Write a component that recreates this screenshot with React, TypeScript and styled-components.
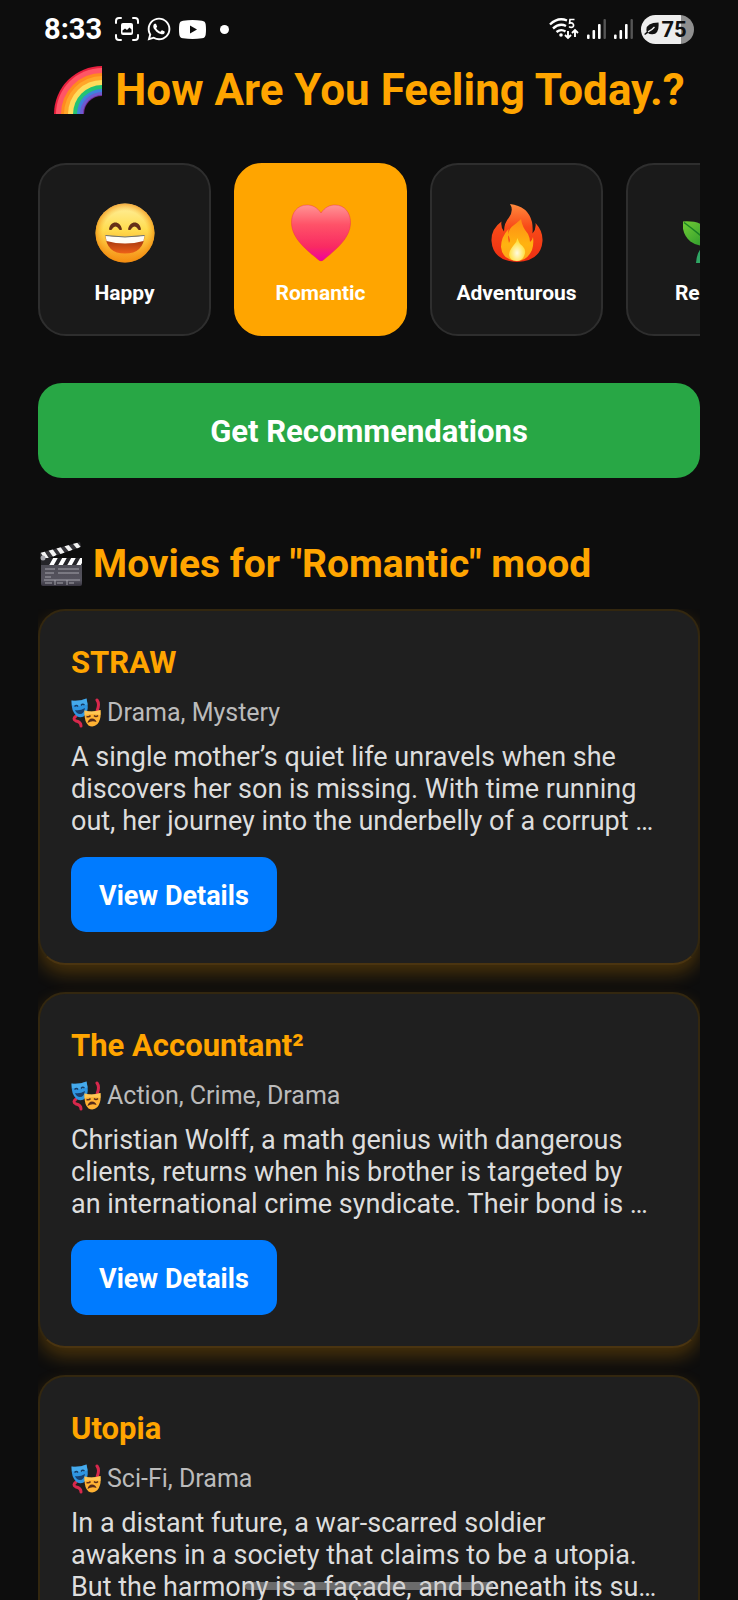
import React, { useState } from "react";
import styled, { createGlobalStyle, css } from "styled-components";
import { FaWhatsapp } from "react-icons/fa";

const GlobalStyle = createGlobalStyle`
  *, *::before, *::after { box-sizing: border-box; }
  body {
    margin: 0;
    background: #0d0d0d;
    color: #fff;
    font-family: Roboto, "Noto Sans", sans-serif;
  }
  button { font-family: inherit; cursor: pointer; border: 0; }
`;

const hiddenScrollbar = css`
  scrollbar-width: none;
  &::-webkit-scrollbar { display: none; }
`;

const Screen = styled.div`
  display: flex;
  flex-direction: column;
  height: 100vh;
  overflow: hidden;
`;

const StatusBar = styled.header`
  display: flex;
  flex: none;
  align-items: center;
  justify-content: space-between;
  height: 58px;
  padding: 0 44px;
`;

const StatusGroup = styled.div<{ $gap: number }>`
  display: flex;
  align-items: center;
  gap: ${(p) => p.$gap}px;
`;

const Clock = styled.time`
  margin-right: 6px;
  font-size: 29px;
  font-weight: 700;
  line-height: 32px;
`;

const Dot = styled.span`
  width: 9px;
  height: 9px;
  margin-left: 7px;
  border-radius: 50%;
  background: #fff;
`;

const Battery = styled.div`
  display: flex;
  align-items: center;
  justify-content: center;
  gap: 2px;
  width: 53px;
  height: 29px;
  padding-right: 4px;
  border-radius: 15px;
  background: linear-gradient(90deg, #ededed 75%, #8f8f8f 75%);
  color: #111;
  font-size: 22px;
  font-weight: 700;
  line-height: 29px;
`;

const Content = styled.main`
  flex: 1;
  min-height: 0;
  padding: 6px 38px 40px;
  overflow-y: auto;
  ${hiddenScrollbar}
`;

const PageTitle = styled.h1`
  display: flex;
  align-items: center;
  justify-content: center;
  gap: 12px;
  margin: 0 0 47px;
  color: #ffa500;
  font-size: 44px;
  font-weight: 700;
  line-height: 52px;
  white-space: nowrap;
`;

const MoodList = styled.div`
  display: flex;
  gap: 23px;
  margin-bottom: 47px;
  overflow-x: auto;
  ${hiddenScrollbar}
`;

const MoodTile = styled.button<{ $selected: boolean }>`
  display: flex;
  flex: none;
  flex-direction: column;
  align-items: center;
  gap: 18px;
  width: 173px;
  height: 173px;
  padding: 38px 0 0;
  border: 2px solid ${(p) => (p.$selected ? "#ffa500" : "#2e2e2e")};
  border-radius: 28px;
  background: ${(p) => (p.$selected ? "#ffa500" : "#1a1a1a")};
  color: #fff;
  font-size: 21px;
  font-weight: 700;
  line-height: 24px;
`;

const PrimaryButton = styled.button`
  width: 100%;
  height: 95px;
  padding: 2px 0 0;
  border-radius: 24px;
  background: #28a745;
  color: #fff;
  font-size: 31px;
  font-weight: 700;
`;

const SectionTitle = styled.h2`
  display: flex;
  align-items: center;
  gap: 9px;
  margin: 63px 0 22px;
  color: #ffa500;
  font-size: 39px;
  font-weight: 700;
  line-height: 46px;
  white-space: nowrap;
`;

const MovieList = styled.div`
  display: flex;
  flex-direction: column;
  gap: 27px;
  padding-bottom: 27px;
  overflow: hidden;
`;

const MovieCard = styled.article`
  padding: 31px;
  border: 2px solid #33270f;
  border-bottom-color: #4a3410;
  border-radius: 27px;
  background: #1f1f1f;
  box-shadow: 0 9px 18px rgba(255, 165, 0, 0.24);
`;

const MovieTitle = styled.h3`
  margin: 0;
  color: #ffa500;
  font-size: 31px;
  font-weight: 700;
  line-height: 42px;
`;

const Genres = styled.p`
  display: flex;
  align-items: center;
  gap: 6px;
  margin: 14px 0 13px;
  color: #bbb;
  font-size: 25px;
  line-height: 30px;
`;

const Overview = styled.p`
  margin: 0 0 20px;
  color: #ddd;
  font-size: 27px;
  line-height: 32px;
  white-space: pre-line;
`;

const DetailsButton = styled.button`
  display: block;
  height: 75px;
  padding: 2px 28px 0;
  border-radius: 15px;
  background: #007bff;
  color: #fff;
  font-size: 27px;
  font-weight: 700;
`;

const HomeIndicator = styled.div`
  position: fixed;
  bottom: 10px;
  left: 50%;
  width: 248px;
  height: 8px;
  border-radius: 4px;
  background: rgba(200, 200, 200, 0.45);
  transform: translateX(-50%);
`;

const CaptureIcon = () => (
  <svg width="24" height="24" viewBox="0 0 24 24" fill="none" stroke="#fff" strokeWidth="2" strokeLinecap="round" aria-hidden>
    <path d="M1 6V4a3 3 0 0 1 3-3h2M18 1h2a3 3 0 0 1 3 3v2M23 18v2a3 3 0 0 1-3 3h-2M6 23H4a3 3 0 0 1-3-3v-2" />
    <rect x="6" y="6" width="12" height="12" rx="2" fill="#fff" stroke="none" />
    <path d="M7.500 15.500v-2l2.500-2 2 1.500 2.500-2.500 2 2v3z" fill="#0d0d0d" stroke="none" />
  </svg>
);

const VideoIcon = () => (
  <svg width="27" height="19" viewBox="0 0 27 19" aria-hidden>
    <path d="M4 .7Q13.500-.5 23 .7q3.300.4 3.700 3.700.6 5 0 10-.4 3.500-3.700 3.900-9.500 1.200-19 0Q.700 17.900.300 14.400q-.6-5 0-10Q.700 1.100 4 .7z" fill="#fff" />
    <path d="M11 5.500v8l7-4z" fill="#0d0d0d" />
  </svg>
);

const WifiIcon = () => (
  <svg width="30" height="22" viewBox="0 0 30 22" fill="none" stroke="#fff" strokeWidth="2.400" aria-hidden>
    <path d="M1 6.500Q9-1.200 18 2.500M4 10.500q6.500-6 13-2.500M7.500 14q4.500-3.500 9-.5" />
    <circle cx="12" cy="17" r="1.800" fill="#fff" stroke="none" />
    <path d="M25.500 1.500h-4.500l-.4 3.600c4-1.300 5.500 3.800 2 4.300q-1.700.1-2.500-1" strokeWidth="1.700" />
    <path d="M19 13v7m-3-3 3 3 3-3M26 19v-7m-3 3 3-3 3 3" strokeWidth="1.900" />
  </svg>
);

const SignalIcon = () => (
  <svg width="19" height="20" viewBox="0 0 19 20" aria-hidden>
    <g fill="#fff">
      <rect x="0" y="15.500" width="2.600" height="4.500" rx="1" />
      <rect x="5.500" y="11" width="2.600" height="9" rx="1" />
      <rect x="11" y="5" width="2.600" height="15" rx="1" />
    </g>
    <rect x="16.500" y="0" width="2.400" height="20" rx="1" fill="#555" />
  </svg>
);

const LeafIcon = () => (
  <svg width="15" height="14" viewBox="0 0 15 14" aria-hidden>
    <path d="M14.500.5Q15.500 12 8.500 12.300 5.500 12.500 4 11L1 13l-.8-1 2.500-2.200Q.500 1 14.500.5z" fill="#111" />
    <path d="M4 9.800Q8 8 10.500 5" fill="none" stroke="#ededed" strokeWidth="1.300" />
  </svg>
);

const RainbowArt = () => {
  const bands = ["#e8203f", "#ff5566", "#ff8a1f", "#ffa629", "#ffdc5c", "#22c275", "#3f82dc", "#6c5bd0", "#77298f"];
  const radii = [48, 46, 41, 38, 34, 29, 25, 22, 19];
  return (
    <svg width="50" height="50" viewBox="0 0 50 50" aria-hidden>
      {bands.map((color, i) => (
        <path key={color} d={`M${49 - radii[i]} 49A${radii[i]} ${radii[i]} 0 0 1 49 ${49 - radii[i]}V49z`} fill={color} />
      ))}
      <path d="M31 49A18 18 0 0 1 49 31V49z" fill="#0d0d0d" />
    </svg>
  );
};

const ClapperArt = () => (
  <svg width="46" height="46" viewBox="0 0 46 46" aria-hidden>
    <defs>
      <linearGradient id="slate" x2="0" y2="1">
        <stop stopColor="#4b4a52" />
        <stop offset=".8" stopColor="#55535e" />
        <stop offset="1" stopColor="#37343f" />
      </linearGradient>
      <clipPath id="armTop"><path d="M2 12 42 1l1 5L5 19q-3-1-3-7z" /></clipPath>
      <clipPath id="armLow"><path d="M3 17h41v7H3z" /></clipPath>
    </defs>
    <rect x="3" y="17" width="41" height="28" rx="2" fill="url(#slate)" />
    <g clipPath="url(#armTop)">
      <path d="M0 0h46v22H0z" fill="#36353a" />
      <path d="m4 10 5 8M12 8l5 7M20 6l5 7M28 4l5 6M36 1l5 6" stroke="#f4f4f4" strokeWidth="4" />
    </g>
    <g clipPath="url(#armLow)">
      <path d="M3 17h41v7H3z" fill="#252529" />
      <path d="m13 25 5-9M22 25l5-9M31 25l5-9M40 25l5-9" stroke="#fff" strokeWidth="4" />
    </g>
    <circle cx="5" cy="17" r="2.500" fill="#a6a6ad" />
    <path d="M7 28h10M20 28h21M7 32h9M20 32h21M7 36h6M6 39h36M17 39v5M29 39v5M7 42h7M19 42h6M31 42h5" stroke="#a3a2aa" strokeWidth="1" />
  </svg>
);

const MasksArt = () => (
  <svg width="30" height="30" viewBox="0 0 30 30" aria-hidden>
    <path d="M26 2q3 4 0 11M5 18q-4 3 0 5 5 1 5 5" fill="none" stroke="#d8284c" strokeWidth="3" strokeLinecap="round" />
    <path d="M.5 2.500q8 1 15-2 3 11-1 16.500-4 4-9 1Q0 13 .5 2.500z" fill="#2f95e0" />
    <path d="M.5 2.500q8 1 15-2l1 6Q8 9 1 7z" fill="#55b9f4" opacity=".6" />
    <path d="M3.500 8.500q2-2 3.500 0M10 7.500q1.500-2 3.500-.5" fill="none" stroke="#163b66" strokeWidth="1.400" />
    <path d="M4 12q5 1 10-2-1 6-5 6-3.500 0-5-4z" fill="#17406f" />
    <path d="M13.500 12.500q8 2 16-.5 1 9-3 14-4 4-9 1.500-4.500-4-4-15z" fill="#ffb233" />
    <path d="M13.500 12.500q8 2 16-.5v5q-8-2-16 0z" fill="#ffd36a" opacity=".6" />
    <path d="M15.500 18.500q2.500 1 4-1M23 17.500q2 2 4 0" fill="none" stroke="#603018" strokeWidth="1.500" />
    <path d="M16.500 25q1-4.500 4.500-4.500t4.500 3.500q-4.500-2-9 1z" fill="#552b1a" />
  </svg>
);

const HappyArt = () => (
  <svg width="60" height="60" viewBox="0 0 60 60" aria-hidden>
    <defs>
      <linearGradient id="face" x2="0" y2="1">
        <stop stopColor="#fff0a0" />
        <stop offset=".45" stopColor="#ffdc4e" />
        <stop offset="1" stopColor="#f68b13" />
      </linearGradient>
      <radialGradient id="faceEdge">
        <stop offset=".75" stopColor="#f8a51b" stopOpacity="0" />
        <stop offset="1" stopColor="#ef8b10" stopOpacity=".7" />
      </radialGradient>
      <linearGradient id="mouth" x2="0" y2="1"><stop stopColor="#8c2b0c" /><stop offset="1" stopColor="#ee6117" /></linearGradient>
    </defs>
    <circle cx="30" cy="30" r="29.500" fill="url(#face)" />
    <circle cx="30" cy="30" r="29.500" fill="url(#faceEdge)" />
    <path d="M14 26.500C15 17 25.500 17 27 26.500q-2.500 1.500-3.500-1-3-4-6 0-1 2.500-3.500 1zM33 26.500C34.500 17 45 17 46 26.500q-2.500 1.500-3.500-1-3-4-6 0-1 2.500-3.500 1z" fill="#663018" />
    <path d="M10.500 32.500q19.500 3 39 0-1 18-19.500 18t-19.500-18z" fill="url(#mouth)" />
    <path d="M10.500 32.500q19.500 3 39 0l-1 5.500Q30 43 11.500 38z" fill="#fffdf5" />
    <path d="M10.500 32.500q19.500 3 39 0" fill="none" stroke="#6d7470" strokeWidth="1" />
  </svg>
);

const HeartArt = () => (
  <svg width="60" height="60" viewBox="0 0 60 60" aria-hidden>
    <defs>
      <linearGradient id="heart" x2="0" y2="1">
        <stop stopColor="#ff9494" />
        <stop offset=".35" stopColor="#ff5268" />
        <stop offset=".75" stopColor="#f92a62" />
        <stop offset="1" stopColor="#f000a0" />
      </linearGradient>
    </defs>
    <path d="M30 10C26 4 21 2 16 2 6 2 .5 10 .5 19.500.5 36 17 48 27 56.500q3 3 6 0C43 48 59.500 36 59.500 19.500 59.500 10 54 2 44 2c-5 0-10 2-14 8z" fill="url(#heart)" stroke="#e61e50" strokeOpacity=".35" />
  </svg>
);

const FireArt = () => (
  <svg width="60" height="60" viewBox="0 0 60 60" aria-hidden>
    <defs>
      <linearGradient id="flame" x2="0" y2="1"><stop stopColor="#ff8a3d" /><stop offset=".4" stopColor="#f84a18" /><stop offset="1" stopColor="#ee2d12" /></linearGradient>
      <linearGradient id="flameMid" x2="0" y2="1"><stop stopColor="#ff8b14" /><stop offset=".6" stopColor="#ffb310" /><stop offset="1" stopColor="#ffa31a" /></linearGradient>
      <radialGradient id="flameCore" cx=".5" cy=".65"><stop stopColor="#fffbe0" /><stop offset="1" stopColor="#ffdf3d" /></radialGradient>
    </defs>
    <path d="M23 1q18 2 22 18 1 5 .5 11.500Q49.500 26 48.500 20 56 28 55.500 38 54 58 30 59 6 58 4.500 38 4 26 14.500 18.500q-1 6 2.500 10Q17 20 22 14.500 27 7 23 1z" fill="url(#flame)" />
    <path d="M34 16q1 8 7 15 2 4 2 8 2-1 3-5 1 7-1 13-5 11-15 11-15-1-16-14 0-10 7.500-18-1 8 .5 14 2-4-1-8 1-7 6-10 5-4 7-6z" fill="url(#flameMid)" />
    <path d="M30.500 35q1 5 5 8 4 4 2 9-2 6-8 6-7-.5-7.500-6 0-4 4-9 4-4 4.500-8z" fill="url(#flameCore)" />
  </svg>
);

const SeedlingArt = () => (
  <svg width="60" height="60" viewBox="0 0 60 60" aria-hidden>
    <defs>
      <linearGradient id="leaf" x2="1" y2="1"><stop stopColor="#72cc35" /><stop offset="1" stopColor="#24952c" /></linearGradient>
    </defs>
    <path d="M27 39Q14 44 13 60h6q4-11 12-16z" fill="#2fa664" />
    <path d="M-.5 18.500q15-1 22 5 8 7 6 19-12 2-20-4-8.500-7-8-20z" fill="url(#leaf)" />
    <path d="M1 19.500q11 8 27 22" fill="none" stroke="#198124" strokeWidth="1.500" />
    <path d="M28 42Q23 13 59 5q2 31-31 37z" fill="url(#leaf)" />
  </svg>
);

const moods = [
  { label: "Happy", Art: HappyArt },
  { label: "Romantic", Art: HeartArt },
  { label: "Adventurous", Art: FireArt },
  { label: "Relaxed", Art: SeedlingArt },
];

const movies = [
  {
    title: "STRAW",
    genres: "Drama, Mystery",
    overview: "A single mother’s quiet life unravels when she\ndiscovers her son is missing. With time running\nout, her journey into the underbelly of a corrupt …",
  },
  {
    title: "The Accountant²",
    genres: "Action, Crime, Drama",
    overview: "Christian Wolff, a math genius with dangerous\nclients, returns when his brother is targeted by\nan international crime syndicate. Their bond is …",
  },
  {
    title: "Utopia",
    genres: "Sci-Fi, Drama",
    overview: "In a distant future, a war-scarred soldier\nawakens in a society that claims to be a utopia.\nBut the harmony is a façade, and beneath its su…",
  },
];

export default function App() {
  const [mood, setMood] = useState("Romantic");

  return (
    <Screen>
      <GlobalStyle />
      <StatusBar>
        <StatusGroup $gap={7}>
          <Clock>8:33</Clock>
          <CaptureIcon />
          <FaWhatsapp size={26} aria-hidden />
          <VideoIcon />
          <Dot />
        </StatusGroup>
        <StatusGroup $gap={8}>
          <WifiIcon />
          <SignalIcon />
          <SignalIcon />
          <Battery>
            <LeafIcon />
            75
          </Battery>
        </StatusGroup>
      </StatusBar>
      <Content>
        <PageTitle>
          <RainbowArt />
          How Are You Feeling Today.?
        </PageTitle>
        <MoodList>
          {moods.map(({ label, Art }) => (
            <MoodTile key={label} type="button" $selected={label === mood} aria-pressed={label === mood} onClick={() => setMood(label)}>
              <Art />
              {label}
            </MoodTile>
          ))}
        </MoodList>
        <PrimaryButton type="button">Get Recommendations</PrimaryButton>
        <SectionTitle>
          <ClapperArt />
          <span>Movies for "{mood}" mood</span>
        </SectionTitle>
        <MovieList>
          {movies.map((movie) => (
            <MovieCard key={movie.title}>
              <MovieTitle>{movie.title}</MovieTitle>
              <Genres>
                <MasksArt />
                {movie.genres}
              </Genres>
              <Overview>{movie.overview}</Overview>
              <DetailsButton type="button">View Details</DetailsButton>
            </MovieCard>
          ))}
        </MovieList>
      </Content>
      <HomeIndicator />
    </Screen>
  );
}
